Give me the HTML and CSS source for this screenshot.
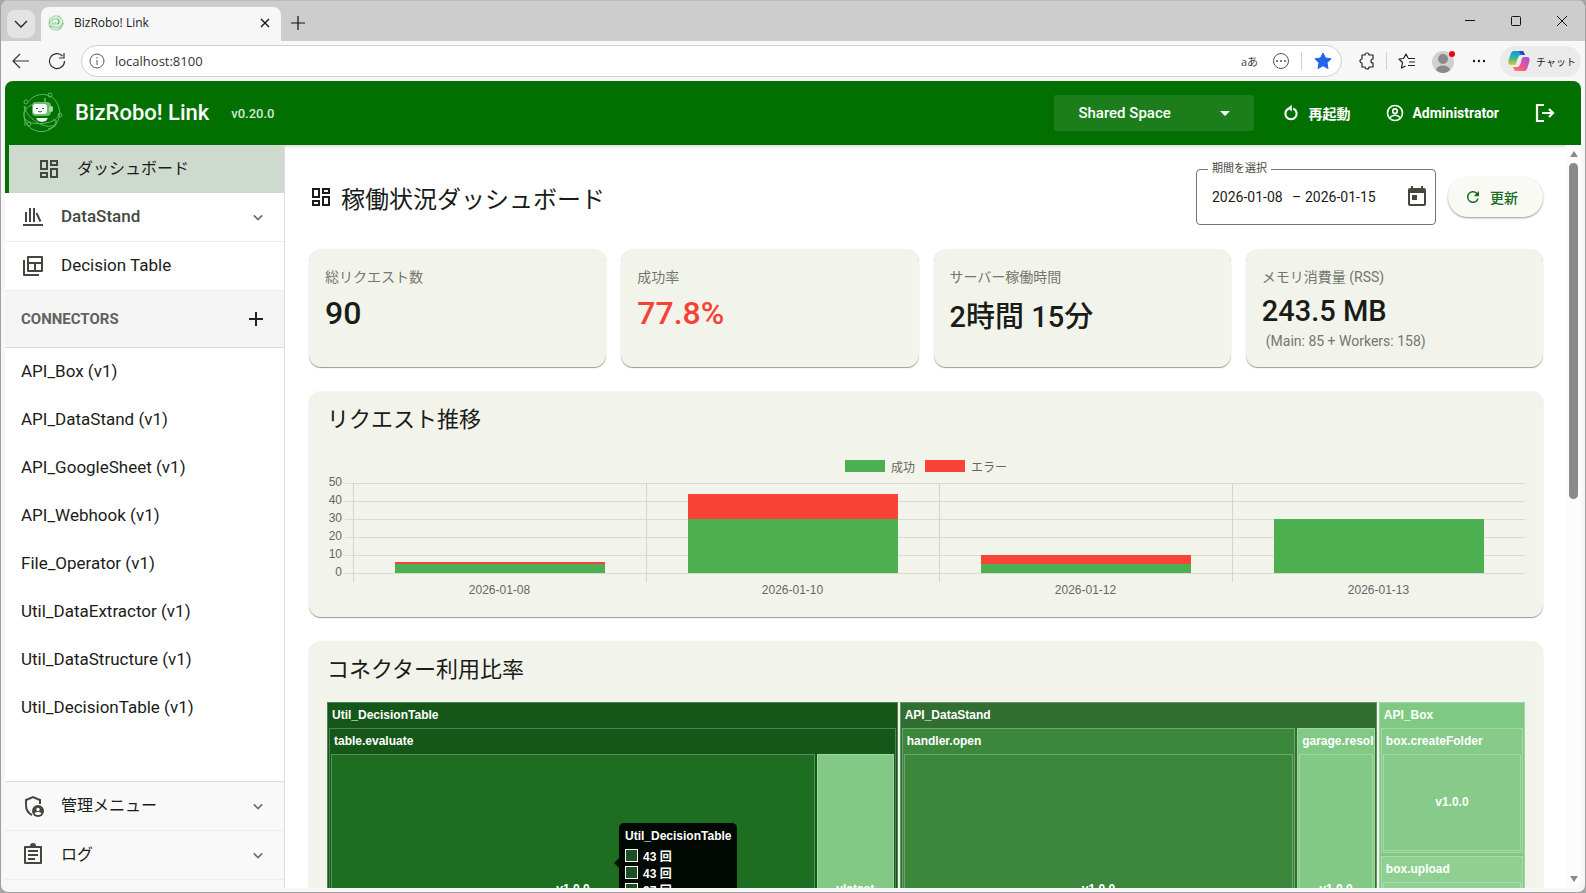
FILE: index.html
```
<!DOCTYPE html>
<html lang="ja">
<head>
    <meta charset="UTF-8">
    <meta name="viewport" content="width=device-width, initial-scale=1.0">
    <title>BizRobo! Link</title>
    <link rel="stylesheet" href="styles.css">
</head>
<body>
    <svg class="sprite" width="0" height="0" aria-hidden="true">
        <symbol id="i-dashboard" viewBox="0 0 24 24"><path d="M19 5v2h-4V5h4M9 5v6H5V5h4m10 8v6h-4v-6h4M9 17v2H5v-2h4M21 3h-8v6h8V3zM11 3H3v10h8V3zm10 8h-8v10h8V11zm-10 4H3v6h8v-6z"/></symbol>
        <symbol id="i-chevron" viewBox="0 0 24 24"><path d="M7 10l5 5 5-5" fill="none" stroke="currentColor" stroke-width="2"/></symbol>
        <symbol id="i-logo" viewBox="0 0 42 42">
            <g fill="none" stroke="#62b565" stroke-width="1">
                <path d="M8 9C15 0 28 1 34 8c6 7 6 18 1 24-2 3-5 4-8 5M5 14C1 22 3 33 11 37c7 4 15 3 20-1 6-3 5-6 1-9M3 14c2 9 12 18 22 20 7 1 11-1 10-6M39 21c-2 6-8 9-14 10-10 2-21 0-22-7-1-5 4-10 10-12M4 27v7"/>
                <circle cx="29" cy="3" r="2"/><circle cx="5" cy="10" r="2"/><circle cx="39" cy="23" r="2"/><circle cx="8" cy="32" r="2"/>
            </g>
            <rect x="11" y="10" width="19" height="14" rx="4" fill="#6dbb70"/>
            <rect x="12" y="12" width="14" height="10" rx="3" fill="#fff"/>
            <rect x="28" y="14" width="4" height="6" rx="2" fill="#a5dba7"/>
            <path d="M15 26h12l-2 3-4 1-4-1z" fill="#e5f5e6"/>
            <path d="M24 6v4" stroke="#a5dba7"/>
            <path d="M15 17q1-2 2 0M21 17q1-2 2 0M17 19q2 2 4 0" fill="none" stroke="#176b1c"/>
        </symbol>
    </svg>

    <div class="window">
        <div class="tabbar">
            <button class="tab-menu" aria-label="Tabs"><svg width="14" height="14" viewBox="0 0 14 14"><path d="M1 4l6 6 6-6" fill="none" stroke="#222" stroke-width="1.3"/></svg></button>
            <div class="tab">
                <svg class="favicon" width="16" height="16"><use href="#i-logo"/></svg>
                <span>BizRobo! Link</span>
                <button class="plain" aria-label="Close tab"><svg width="10" height="10" viewBox="0 0 10 10"><path d="M1 1l8 8M9 1l-8 8" stroke="#111" stroke-width="1.3"/></svg></button>
            </div>
            <button class="plain new-tab" aria-label="New tab"><svg width="14" height="14" viewBox="0 0 14 14"><path d="M7 0v14M0 7h14" stroke="#111" stroke-width="1.2"/></svg></button>
            <div class="win-controls">
                <button class="plain" aria-label="Minimize"><svg width="10" height="10" viewBox="0 0 10 10"><path d="M0 4.5h10" stroke="#111"/></svg></button>
                <button class="plain" aria-label="Maximize"><svg width="10" height="10" viewBox="0 0 10 10"><rect x=".5" y=".5" width="9" height="9" rx="1" fill="none" stroke="#111"/></svg></button>
                <button class="plain" aria-label="Close"><svg width="10" height="10" viewBox="0 0 10 10"><path d="M0 0l10 10M10 0L0 10" stroke="#111"/></svg></button>
            </div>
        </div>

        <div class="toolbar">
            <button class="plain" aria-label="Back"><svg width="18" height="16" viewBox="0 0 18 16"><path d="M17 8H2M8 1L1 8l7 7" fill="none" stroke="#333" stroke-width="1.2"/></svg></button>
            <button class="plain" aria-label="Reload"><svg width="18" height="18" viewBox="0 0 18 18"><path d="M16.500 9A7.500 7.500 0 1 1 14.500 4M16 1v5h-5" fill="none" stroke="#333" stroke-width="1.2"/></svg></button>
            <div class="address">
                <svg width="16" height="16" viewBox="0 0 16 16"><circle cx="8" cy="8" r="7" fill="none" stroke="#555"/><path d="M8 7v5M8 4v1.500" stroke="#555"/></svg>
                <input type="text" value="localhost:8100" aria-label="Address">
                <span class="lang">aあ</span>
                <svg width="18" height="18" viewBox="0 0 18 18"><circle cx="9" cy="9" r="7.500" fill="none" stroke="#555"/><circle cx="5" cy="9" r="1" fill="#555"/><circle cx="9" cy="9" r="1" fill="#555"/><circle cx="13" cy="9" r="1" fill="#555"/></svg>
                <i class="divider"></i>
                <svg width="18" height="18" viewBox="0 0 18 18"><path d="M9 1l2.500 5 5.500.800-4 4 1 5.700-5-2.700-5 2.700 1-5.700-4-4L6.500 6z" fill="#2364eb" stroke="#2364eb" stroke-linejoin="round"/></svg>
            </div>
            <button class="plain ext" aria-label="Extensions"><svg width="18" height="18" viewBox="0 0 18 18"><path d="M4 3h3a2 2 0 0 1 4 0h4v4a2 2 0 0 0 0 4v4h-4a2 2 0 0 1-4 0H4v-4a2 2 0 0 1 0-4z" fill="none" stroke="#222" stroke-width="1.2" stroke-linejoin="round"/></svg></button>
            <i class="divider"></i>
            <button class="plain fav" aria-label="Favorites"><svg width="18" height="18" viewBox="0 0 18 18"><path d="M10 6L8 2 5.500 6.500 1 7l3.500 3.500L3.500 16l4-2M10 6.500h7M11 10h6M10 13.500h7" fill="none" stroke="#222" stroke-width="1.200" stroke-linejoin="round"/></svg></button>
            <button class="plain avatar" aria-label="Profile"><svg width="24" height="24" viewBox="0 0 24 24"><circle cx="11" cy="13" r="11" fill="#d2d0ce"/><circle cx="11" cy="10" r="5" fill="#8b8988"/><path d="M4 21c1-6 13-6 14 0-4 4-10 4-14 0z" fill="#8b8988"/><circle cx="20" cy="5" r="3" fill="#f00010"/></svg></button>
            <button class="plain more" aria-label="Settings"><svg width="14" height="4" viewBox="0 0 14 4"><circle cx="2" cy="2" r="1.200"/><circle cx="7" cy="2" r="1.200"/><circle cx="12" cy="2" r="1.200"/></svg></button>
            <button class="chat">
                <svg width="22" height="22" viewBox="0 0 22 22">
                    <defs>
                        <linearGradient id="cp1" x1="0" y1="0" x2="0" y2="1"><stop offset="0" stop-color="#1b8fe6"/><stop offset=".5" stop-color="#2fb9a0"/><stop offset="1" stop-color="#e8c71c"/></linearGradient>
                        <linearGradient id="cp2" x1="1" y1="0" x2="0" y2="1"><stop offset="0" stop-color="#a04de8"/><stop offset=".6" stop-color="#ee5a8c"/><stop offset="1" stop-color="#f98a50"/></linearGradient>
                    </defs>
                    <path d="M6 1h8c2 0 2 2 3 4h-4c-2 0-3 2-4 5l-1 4c-1 1-1 1-3 1H3c-3 0-3-3-2-6l2-6c1-1 1-2 3-2z" fill="url(#cp1)"/>
                    <path d="M16 21H8c-2 0-2-2-3-4h4c2 0 3-2 4-5l1-4c1-1 1-1 3-1h2c3 0 3 3 2 6l-2 6c-1 1-1 2-3 2z" fill="url(#cp2)"/>
                    <path d="M11 1h3c2 0 2 2 3 4h-4z" fill="#1b4fc8"/>
                </svg>
                チャット
            </button>
        </div>

        <div class="app">
            <header class="topbar">
                <svg class="logo" width="42" height="42"><use href="#i-logo"/></svg>
                <span class="brand">BizRobo! Link</span>
                <span class="version">v0.20.0</span>
                <div class="space">
                    <select aria-label="Space"><option>Shared Space</option></select>
                </div>
                <button class="top-btn restart">
                    <svg width="18" height="18" viewBox="0 0 24 24"><path d="M15 6a7.500 7.500 0 1 1-6 0" fill="none" stroke="#fff" stroke-width="2.800"/><path d="M13 1v9L7.500 5.500z" fill="#fff"/></svg>
                    再起動
                </button>
                <button class="top-btn admin">
                    <svg width="18" height="18" viewBox="0 0 24 24"><circle cx="12" cy="12" r="10" fill="none" stroke="#fff" stroke-width="2.200"/><circle cx="12" cy="9.500" r="3" fill="none" stroke="#fff" stroke-width="2.200"/><path d="M5.500 18c3-4 10-4 13 0" fill="none" stroke="#fff" stroke-width="2.200"/></svg>
                    Administrator
                </button>
                <button class="top-btn logout" aria-label="Logout">
                    <svg width="24" height="24" viewBox="0 0 24 24"><path d="M11 4H4v16h7M9 12h11M16 8l4 4-4 4" fill="none" stroke="#fff" stroke-width="2.200"/></svg>
                </button>
            </header>

            <div class="body">
                <nav class="sidebar">
                    <a href="#" class="nav-item active"><svg width="24" height="24"><use href="#i-dashboard"/></svg>ダッシュボード</a>
                    <a href="#" class="nav-item latin">
                        <svg width="24" height="24" viewBox="0 0 24 24"><path d="M2 20h20M5 7v10M9 3v14M13 3v14M15.500 8l4 8.500" fill="none" stroke="currentColor" stroke-width="2"/></svg>
                        <span class="strong">DataStand</span>
                        <svg class="chev" width="20" height="20"><use href="#i-chevron"/></svg>
                    </a>
                    <a href="#" class="nav-item latin">
                        <svg width="24" height="24" viewBox="0 0 24 24"><path d="M7 3h14v14H7zM7 9h14M14 9v8M3 6v15h15" fill="none" stroke="currentColor" stroke-width="2" stroke-linejoin="round"/></svg>
                        <span>Decision Table</span>
                    </a>
                    <div class="nav-head">
                        <span>CONNECTORS</span>
                        <button class="plain" aria-label="Add connector"><svg width="14" height="14" viewBox="0 0 14 14"><path d="M7 0v14M0 7h14" stroke="#222" stroke-width="2"/></svg></button>
                    </div>
                    <div class="connectors">
                        <a href="#">API_Box (v1)</a>
                        <a href="#">API_DataStand (v1)</a>
                        <a href="#">API_GoogleSheet (v1)</a>
                        <a href="#">API_Webhook (v1)</a>
                        <a href="#">File_Operator (v1)</a>
                        <a href="#">Util_DataExtractor (v1)</a>
                        <a href="#">Util_DataStructure (v1)</a>
                        <a href="#">Util_DecisionTable (v1)</a>
                    </div>
                    <div class="nav-foot">
                        <a href="#" class="nav-item">
                            <svg width="24" height="24" viewBox="0 0 24 24"><path d="M19 10V6l-7-3-7 3v5c0 4 2 8 6 10" fill="none" stroke="currentColor" stroke-width="2"/><circle cx="17" cy="17" r="6" fill="currentColor"/><circle cx="17" cy="15.500" r="1.700" fill="#f9f9f9"/><path d="M13.500 19.500c1-2 6-2 7 0-2 2-5 2-7 0z" fill="#f9f9f9"/></svg>
                            管理メニュー
                            <svg class="chev" width="20" height="20"><use href="#i-chevron"/></svg>
                        </a>
                        <a href="#" class="nav-item">
                            <svg width="24" height="24" viewBox="0 0 24 24"><path d="M4 4h16v16H4z" fill="none" stroke="currentColor" stroke-width="2" stroke-linejoin="round"/><path d="M9 3a3 3 0 0 1 6 0v1H9z"/><path d="M7 8h10M7 12h10M7 16h7" stroke="currentColor" stroke-width="2"/></svg>
                            ログ
                            <svg class="chev" width="20" height="20"><use href="#i-chevron"/></svg>
                        </a>
                    </div>
                </nav>

                <main class="content">
                    <div class="page-head">
                        <h1><svg width="24" height="24"><use href="#i-dashboard"/></svg>稼働状況ダッシュボード</h1>
                        <fieldset class="period">
                            <legend>期間を選択</legend>
                            <div class="period-row">
                                <input type="text" value="2026-01-08" aria-label="開始日">
                                <span>–</span>
                                <input type="text" value="2026-01-15" aria-label="終了日">
                                <button class="plain" aria-label="カレンダー"><svg width="24" height="24" viewBox="0 0 24 24"><path d="M19 3h-1V1h-2v2H8V1H6v2H5c-1.110 0-2 .900-2 2v14a2 2 0 0 0 2 2h14c1.100 0 2-.900 2-2V5c0-1.100-.900-2-2-2zm0 16H5V8h14v11zM7 10h5v5H7z" fill="#43483f"/></svg></button>
                            </div>
                        </fieldset>
                        <button class="refresh">
                            <svg width="18" height="18" viewBox="0 0 24 24"><path d="M17.650 6.350A8 8 0 1 0 19.730 14h-2.080A6 6 0 1 1 12 6c1.660 0 3.140.690 4.220 1.780L13 11h7V4z" fill="#146c1a"/></svg>
                            更新
                        </button>
                    </div>

                    <section class="stats">
                        <div class="card stat"><span class="label">総リクエスト数</span><span class="value big">90</span></div>
                        <div class="card stat"><span class="label">成功率</span><span class="value big red">77.8%</span></div>
                        <div class="card stat"><span class="label">サーバー稼働時間</span><span class="value time">2時間 15分</span></div>
                        <div class="card stat"><span class="label">メモリ消費量 (RSS)</span><span class="value memory">243.5 MB</span><span class="sub">(Main: 85 + Workers: 158)</span></div>
                    </section>

                    <section class="card panel">
                        <h2>リクエスト推移</h2>
                        <div class="legend">
                            <i class="ok"></i><span>成功</span>
                            <i class="err"></i><span>エラー</span>
                        </div>
                        <div class="chart">
                            <div class="y-axis"><span>50</span><span>40</span><span>30</span><span>20</span><span>10</span><span>0</span></div>
                            <div class="plot">
                                <div class="col"><i class="err" style="height:2%"></i><i class="ok" style="height:10%"></i></div>
                                <div class="col"><i class="err" style="height:28%"></i><i class="ok" style="height:60%"></i></div>
                                <div class="col"><i class="err" style="height:10%"></i><i class="ok" style="height:10%"></i></div>
                                <div class="col"><i class="ok" style="height:60%"></i></div>
                            </div>
                        </div>
                        <div class="x-axis"><span>2026-01-08</span><span>2026-01-10</span><span>2026-01-12</span><span>2026-01-13</span></div>
                    </section>

                    <section class="card panel">
                        <h2>コネクター利用比率</h2>
                        <div class="treemap">
                            <div class="node util" style="flex-grow:572">
                                <b>Util_DecisionTable</b>
                                <div class="group">
                                    <div class="node evaluate" style="flex-grow:1">
                                        <b>table.evaluate</b>
                                        <div class="group">
                                            <div class="leaf dark" style="flex-grow:489">v1.0.0</div>
                                            <div class="leaf light" style="flex-grow:76">vlatest</div>
                                        </div>
                                    </div>
                                </div>
                                <div class="tooltip">
                                    <b>Util_DecisionTable</b>
                                    <span><i></i>43 回</span>
                                    <span><i></i>43 回</span>
                                    <span><i></i>37 回</span>
                                </div>
                            </div>
                            <div class="node stand" style="flex-grow:478">
                                <b>API_DataStand</b>
                                <div class="group">
                                    <div class="node open" style="flex-grow:398"><b>handler.open</b><div class="group"><div class="leaf mid" style="flex-grow:1">v1.0.0</div></div></div>
                                    <div class="node resolve" style="flex-grow:77"><b>garage.resolve</b><div class="group"><div class="leaf light" style="flex-grow:1">v1.0.0</div></div></div>
                                </div>
                            </div>
                            <div class="node box" style="flex-grow:145">
                                <b>API_Box</b>
                                <div class="group rows">
                                    <div class="node folder" style="flex-grow:125"><b>box.createFolder</b><div class="group"><div class="leaf pale" style="flex-grow:1">v1.0.0</div></div></div>
                                    <div class="node upload" style="flex-grow:171"><b>box.upload</b><div class="group"><div class="leaf paler" style="flex-grow:1">v1.0.0</div></div></div>
                                </div>
                            </div>
                        </div>
                    </section>
                </main>

                <div class="scrollbar"><i class="up"></i><i class="thumb"></i><i class="down"></i></div>
            </div>
        </div>
    </div>
</body>
</html>
```
FILE: styles.css
```
* {
    box-sizing: border-box;
}
body {
    margin: 0;
    height: 100vh;
    overflow: hidden;
    background-color: #a6a6a6;
    color: #1a1c18;
    font-family: Roboto, "Noto Sans CJK JP", sans-serif;
    font-size: 14px;
}
svg {
    display: block;
    flex: none;
    fill: currentColor;
}
.sprite {
    position: absolute;
}
button, input, select {
    font: inherit;
    color: inherit;
}
button {
    cursor: pointer;
}
a {
    color: inherit;
    text-decoration: none;
}
.plain {
    display: flex;
    align-items: center;
    justify-content: center;
    padding: 0;
    border: none;
    background: none;
}

/* browser window */
.window {
    display: flex;
    flex-direction: column;
    height: 100vh;
    border: 1px solid #a0a0a0;
    border-top-color: #bababa;
    border-radius: 8px;
    background-color: #f7f7f7;
    overflow: hidden;
    font-family: "Open Sans", "Noto Sans CJK JP", sans-serif;
}
.tabbar {
    display: flex;
    align-items: flex-end;
    height: 40px;
    flex: none;
    padding-left: 6px;
    background-color: #cdcdcd;
}
.tab-menu {
    display: flex;
    align-items: center;
    justify-content: center;
    width: 28px;
    height: 28px;
    margin-bottom: 3px;
    padding: 0;
    border: none;
    border-radius: 8px;
    background-color: #e3e3e3;
}
.tab {
    display: flex;
    align-items: center;
    width: 240px;
    height: 34px;
    margin-left: 6px;
    padding: 0 11px 3px 7px;
    border-radius: 8px 8px 0 0;
    background-color: #f7f7f7;
    font-size: 12px;
    color: #1b1b1b;
}
.tab span {
    flex: 1;
    margin-left: 10px;
}
.tab .favicon {
    background-color: #dcefdc;
    border-radius: 8px;
}
.new-tab {
    width: 34px;
    height: 37px;
}
.win-controls {
    display: flex;
    align-self: stretch;
    margin-left: auto;
}
.win-controls button {
    width: 46px;
}
.toolbar {
    display: flex;
    align-items: center;
    height: 40px;
    flex: none;
    padding: 0 4px 0 11px;
}
.toolbar > .plain {
    width: 18px;
    margin-right: 18px;
}
.address {
    display: flex;
    align-items: center;
    flex: 1;
    height: 32px;
    margin-left: -3px;
    padding: 0 9px 0 7px;
    border: 1px solid #cfcfcf;
    border-radius: 16px;
    background-color: #fff;
}
.address input {
    flex: 1;
    min-width: 0;
    margin-left: 10px;
    padding: 0;
    border: none;
    outline: none;
    background: none;
    font-size: 13px;
    color: #333;
}
.lang {
    margin-right: 14px;
    font-size: 11px;
    color: #444;
}
.divider {
    width: 1px;
    height: 18px;
    background-color: #cfcfcf;
}
.address .divider {
    margin: 0 12px 0 11px;
}
.toolbar > .ext {
    margin: 0 10px 0 16px;
}
.toolbar > .fav {
    margin: 0 16px 0 11px;
}
.toolbar > .avatar {
    width: 24px;
    margin-right: 16px;
}
.toolbar > .more {
    width: 14px;
    margin-right: 14px;
}
.chat {
    display: flex;
    align-items: center;
    gap: 6px;
    height: 31px;
    width: 81px;
    padding: 0 8px;
    border: none;
    border-radius: 16px;
    background-color: #ebebeb;
    font-size: 10px;
    white-space: nowrap;
}

/* application */
.app {
    display: flex;
    flex-direction: column;
    flex: 1;
    min-height: 0;
    margin: 0 4px 4px;
    border-radius: 8px;
    background-color: #fff;
    overflow: hidden;
    font-family: Roboto, "Noto Sans CJK JP", sans-serif;
}
.topbar {
    display: flex;
    align-items: center;
    height: 64px;
    flex: none;
    padding: 0 24px 0 16px;
    background-color: #017000;
    color: #fff;
    box-shadow: 0 1px 4px rgba(0, 0, 0, 0.2);
}
.brand {
    margin-left: 12px;
    padding-bottom: 2px;
    font-size: 22px;
    font-weight: 500;
}
.version {
    margin-left: 22px;
    font-size: 13px;
    font-weight: 500;
    color: #d5e8d5;
}
.space {
    position: relative;
    width: 200px;
    margin-left: auto;
}
.space select {
    width: 100%;
    height: 36px;
    padding: 0 24px;
    appearance: none;
    border: none;
    border-radius: 2px;
    background-color: #1b7e1a;
    font-size: 15px;
    font-weight: 500;
}
.space::after {
    content: "";
    position: absolute;
    right: 24px;
    top: 16px;
    border: 5px solid transparent;
    border-top-color: #fff;
    border-bottom: none;
}
.top-btn {
    display: flex;
    align-items: center;
    gap: 8px;
    padding: 0;
    border: none;
    background: none;
    font-size: 14px;
    font-weight: 700;
}
.restart {
    margin-left: 28px;
}
.admin {
    margin-left: 36px;
}
.logout {
    margin-left: 34px;
}
.body {
    display: flex;
    flex: 1;
    min-height: 0;
}

/* sidebar */
.sidebar {
    display: flex;
    flex-direction: column;
    width: 280px;
    flex: none;
    border-right: 1px solid #dcdcdc;
}
.nav-item {
    display: flex;
    align-items: center;
    gap: 16px;
    height: 49px;
    flex: none;
    padding: 0 16px;
    border-bottom: 1px solid #ececec;
    font-size: 16px;
    line-height: 24px;
}
.nav-item svg {
    color: #43483f;
}
.nav-item .chev {
    margin-left: auto;
    color: #6b6f68;
}
.nav-item.active {
    height: 48px;
    padding-left: 28px;
    border-left: 4px solid #017000;
    border-bottom: none;
    background-color: #cfdacf;
}
.nav-item.latin {
    font-size: 17px;
}
.nav-item span {
    padding-bottom: 2px;
}
.nav-item .strong {
    font-weight: 500;
    color: #43483f;
}
.nav-head {
    display: flex;
    align-items: center;
    justify-content: space-between;
    height: 57px;
    flex: none;
    padding: 0 21px 0 16px;
    border-bottom: 1px solid #dcdcdc;
    background-color: #f5f5f5;
    font-size: 15px;
    font-weight: 700;
    color: #616161;
}
.connectors {
    flex: 1;
    min-height: 0;
    overflow: hidden;
}
.connectors a {
    display: block;
    padding: 0 0 2px 16px;
    font-size: 17px;
    line-height: 46px;
}
.nav-foot {
    padding-bottom: 8px;
    border-top: 1px solid #dcdcdc;
    background-color: #f9f9f9;
}

/* dashboard */
.content {
    flex: 1;
    min-width: 0;
    padding: 24px 23px 24px 24px;
    overflow: hidden;
}
.page-head {
    display: flex;
    align-items: center;
    height: 56px;
    margin-bottom: 24px;
}
h1 {
    display: flex;
    align-items: center;
    gap: 8px;
    flex: 1;
    margin: 0;
    font-size: 24px;
    font-weight: 400;
}
.period {
    width: 240px;
    height: 64px;
    min-width: 0;
    margin: -8px 12px 0 0;
    padding: 0 6px 7px 15px;
    border: 1px solid #73776f;
    border-radius: 4px;
}
.period legend {
    margin-left: -4px;
    padding: 0 4px;
    font-size: 11px;
    line-height: 16px;
    color: #43483f;
}
.period-row {
    display: flex;
    align-items: center;
    height: 40px;
}
.period input {
    width: 80px;
    padding: 0;
    border: none;
    outline: none;
    background: none;
}
.period span {
    width: 13px;
}
.period button {
    margin-left: auto;
}
.refresh {
    display: flex;
    align-items: center;
    gap: 8px;
    width: 95px;
    height: 40px;
    padding: 0 0 0 16px;
    border: none;
    border-radius: 20px;
    background-color: #f8faf3;
    box-shadow: 0 1px 2px rgba(0, 0, 0, 0.4);
    color: #146c1a;
    font-weight: 500;
}
.card {
    border-radius: 12px;
    background-color: #f2f4eb;
    box-shadow: 0 1px 1px rgba(0, 0, 0, 0.4);
}
.stats {
    display: grid;
    grid-template-columns: repeat(4, 1fr);
    gap: 15px;
    margin-bottom: 24px;
}
.stat {
    display: flex;
    flex-direction: column;
    padding: 16px 16px 18px;
}
.label {
    line-height: 24px;
    color: #73776f;
}
.value {
    font-weight: 500;
}
.big {
    font-size: 32px;
    line-height: 48px;
}
.time {
    font-size: 29px;
    line-height: 56px;
}
.memory {
    font-size: 29px;
    line-height: 44px;
}
.red {
    color: #f44336;
}
.sub {
    margin-left: 4px;
    line-height: 16px;
    color: #73776f;
}
.panel {
    margin-bottom: 24px;
    padding: 15px 18px 19px;
}
h2 {
    margin: 0 0 18px;
    font-size: 22px;
    font-weight: 400;
    line-height: 28px;
}

/* stacked bar chart */
.legend {
    display: flex;
    align-items: center;
    justify-content: center;
    height: 16px;
    margin: 24px 0 9px;
    font-family: "Liberation Sans", "Noto Sans CJK JP", sans-serif;
    font-size: 12px;
    color: #666;
}
.legend i {
    width: 40px;
    height: 12px;
    margin-right: 6px;
}
.legend span {
    margin-right: 10px;
}
.legend span:last-child {
    margin-right: 0;
}
.ok {
    background-color: #4caf50;
}
.err {
    background-color: #f84437;
}
.chart {
    display: flex;
    font-family: "Liberation Sans", sans-serif;
    font-size: 12px;
    color: #666;
}
.y-axis {
    display: flex;
    flex-direction: column;
    width: 18px;
    margin-top: -10px;
    padding-right: 3px;
    text-align: right;
    line-height: 18px;
}
.y-axis span {
    display: flex;
    justify-content: flex-end;
}
.plot {
    display: flex;
    flex: 1;
    height: 99px;
    padding-left: 8px;
    background: repeating-linear-gradient(to bottom, #d8dad3 0, #d8dad3 1px, transparent 1px, transparent 18px) no-repeat 0 0 / 100% 91px;
}
.col {
    display: flex;
    flex-direction: column;
    justify-content: flex-end;
    align-items: center;
    flex: 1;
    padding-bottom: 9px;
    border-left: 1px solid #d2d4cd;
}
.col i {
    width: 72%;
}
.x-axis {
    display: flex;
    padding-left: 26px;
    font-family: "Liberation Sans", sans-serif;
    font-size: 12px;
    line-height: 16px;
    color: #666;
}
.x-axis span {
    flex: 1;
    text-align: center;
}

/* treemap */
.treemap {
    display: flex;
    gap: 2px;
    height: 326px;
    font-family: "Liberation Sans", "Noto Sans CJK JP", sans-serif;
    font-size: 12px;
    font-weight: 700;
    color: #fff;
}
.node {
    position: relative;
    display: flex;
    flex-direction: column;
    flex-basis: 0;
    min-width: 0;
    border: 1px solid rgba(255, 255, 255, 0.25);
}
.node > b {
    height: 25px;
    flex: none;
    padding-left: 4px;
    line-height: 24px;
    overflow: hidden;
    white-space: nowrap;
}
.group {
    display: flex;
    gap: 2px;
    flex: 1;
    min-height: 0;
    padding: 0 1px 1px;
}
.group.rows {
    flex-direction: column;
    gap: 3px;
}
.leaf {
    display: flex;
    align-items: center;
    justify-content: center;
    flex-basis: 0;
    min-width: 0;
    border: 1px solid rgba(255, 255, 255, 0.25);
}
.util, .evaluate {
    background-color: #155718;
}
.dark {
    background-color: #1d6e20;
}
.stand {
    background-color: #306e32;
}
.open, .mid {
    background-color: #3b883d;
}
.resolve, .light {
    background-color: #82c985;
}
.box {
    background-color: #7fc982;
}
.folder, .pale {
    background-color: #86cb89;
}
.upload, .paler {
    background-color: #8fd092;
}
.tooltip {
    position: absolute;
    left: 291px;
    top: 120px;
    width: 118px;
    padding: 4px 6px 6px;
    border-radius: 5px;
    background-color: rgba(0, 0, 0, 0.93);
    z-index: 1;
    white-space: nowrap;
}
.tooltip::before {
    content: "";
    position: absolute;
    left: -5px;
    top: 35px;
    border: 5px solid transparent;
    border-right-color: #041205;
    border-left: none;
}
.tooltip b {
    display: block;
    line-height: 18px;
    margin-bottom: 2px;
}
.tooltip span {
    display: flex;
    align-items: center;
    height: 17px;
}
.tooltip i {
    width: 13px;
    height: 13px;
    margin-right: 5px;
    border: 1px solid #fff;
    background-color: #1b4f20;
}

/* scrollbar */
.scrollbar {
    display: flex;
    flex-direction: column;
    align-items: center;
    width: 15px;
    padding: 6px 0;
    background-color: #fcfcfc;
}
.scrollbar .up, .scrollbar .down {
    border: 4px solid transparent;
}
.scrollbar .up {
    border-top: none;
    border-bottom: 6px solid #8a8a8a;
}
.scrollbar .down {
    margin-top: auto;
    border-bottom: none;
    border-top: 6px solid #8a8a8a;
}
.scrollbar .thumb {
    width: 9px;
    height: 46%;
    margin-top: 6px;
    border-radius: 5px;
    background-color: #8a8a8a;
}
```
